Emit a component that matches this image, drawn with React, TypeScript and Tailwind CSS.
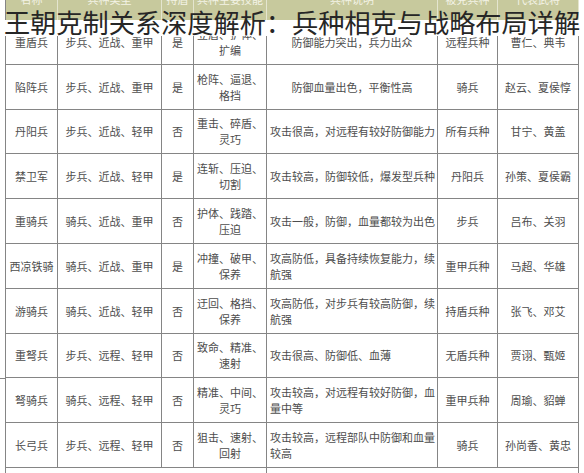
import React from 'react';

interface TroopRow {
  name: string;
  type: string;
  shield: string;
  skills: [string, string];
  desc: string[];
  descAlign: 'center' | 'left';
  counter: string;
  heroes: string;
}

const headers = ['名称', '兵种类型', '持盾', '兵种主要技能', '兵种说明', '被克兵种', '代表武将'];

const rows: TroopRow[] = [
  { name: '重盾兵', type: '步兵、近战、重甲', shield: '是', skills: ['立盾、护体、', '扩编'], desc: ['防御能力突出，兵力出众'], descAlign: 'center', counter: '远程兵种', heroes: '曹仁、典韦' },
  { name: '陷阵兵', type: '步兵、近战、重甲', shield: '是', skills: ['枪阵、逼退、', '格挡'], desc: ['防御血量出色，平衡性高'], descAlign: 'center', counter: '骑兵', heroes: '赵云、夏侯惇' },
  { name: '丹阳兵', type: '步兵、近战、轻甲', shield: '否', skills: ['重击、碎盾、', '灵巧'], desc: ['攻击很高，对远程有较好防御能力'], descAlign: 'left', counter: '所有兵种', heroes: '甘宁、黄盖' },
  { name: '禁卫军', type: '步兵、近战、轻甲', shield: '是', skills: ['连斩、压迫、', '切割'], desc: ['攻击较高，防御较低，爆发型兵种'], descAlign: 'left', counter: '丹阳兵', heroes: '孙策、夏侯霸' },
  { name: '重骑兵', type: '骑兵、近战、重甲', shield: '否', skills: ['护体、践踏、', '压迫'], desc: ['攻击一般，防御，血量都较为出色'], descAlign: 'left', counter: '步兵', heroes: '吕布、关羽' },
  { name: '西凉铁骑', type: '骑兵、近战、重甲', shield: '是', skills: ['冲撞、破甲、', '保养'], desc: ['攻高防低，具备持续恢复能力，续', '航强'], descAlign: 'left', counter: '重甲兵种', heroes: '马超、华雄' },
  { name: '游骑兵', type: '骑兵、近战、轻甲', shield: '否', skills: ['迂回、格挡、', '保养'], desc: ['攻高防低，对步兵有较高防御，续', '航强'], descAlign: 'left', counter: '持盾兵种', heroes: '张飞、邓艾' },
  { name: '重弩兵', type: '步兵、远程、轻甲', shield: '否', skills: ['致命、精准、', '速射'], desc: ['攻击很高、防御低、血薄'], descAlign: 'left', counter: '无盾兵种', heroes: '贾诩、甄姬' },
  { name: '弩骑兵', type: '骑兵、远程、轻甲', shield: '否', skills: ['精准、中间、', '灵巧'], desc: ['攻击较高，对远程有较好防御，血', '量中等'], descAlign: 'left', counter: '重甲兵种', heroes: '周瑜、貂蝉' },
  { name: '长弓兵', type: '步兵、远程、轻甲', shield: '否', skills: ['狙击、速射、', '回射'], desc: ['攻击较高，远程部队中防御和血量', '较高'], descAlign: 'left', counter: '骑兵', heroes: '孙尚香、黄忠' },
];

const cell = 'flex items-center justify-center border-r border-b border-[#858585] text-center';

const App: React.FC = () => {
  return (
    <div className="relative w-[584px] h-[473px] overflow-hidden bg-white font-['Noto_Sans_CJK_SC',sans-serif] text-[11px] leading-[16px] text-[#4d4d4d]">
      {/* Table */}
      <div className="ml-[5px] w-[574px] border-l border-[#858585]">
        {/* Header row, mostly cropped */}
        <div className="grid h-[20px] grid-cols-[52px_104px_32px_73px_171px_60px_81px] overflow-hidden bg-[#c7c99d] text-[#f3f3e6]">
          {headers.map((h) => (
            <div key={h} className="flex justify-center border-r border-[#e4e5cf]">
              <span className="-mt-[9px]">{h}</span>
            </div>
          ))}
        </div>

        {rows.map((r) => (
          <div key={r.name} className="grid h-[44.8px] grid-cols-[52px_104px_32px_73px_171px_60px_81px]">
            <div className={cell}>{r.name}</div>
            <div className={cell}>{r.type}</div>
            <div className={cell}>{r.shield}</div>
            <div className={`${cell} flex-col`}>
              <span>{r.skills[0]}</span>
              <span>{r.skills[1]}</span>
            </div>
            <div
              className={`flex flex-col justify-center border-r border-b border-[#858585] px-[3px] ${
                r.descAlign === 'center' ? 'items-center' : 'items-start'
              }`}
            >
              {r.desc.map((line) => (
                <span key={line} className="whitespace-nowrap">{line}</span>
              ))}
            </div>
            <div className={cell}>{r.counter}</div>
            <div className={cell}>{r.heroes}</div>
          </div>
        ))}

        {/* Start of the next table below */}
        <div className="flex h-[6px]">
          <div className="ml-[260px] w-px bg-[#858585]" />
          <div className="ml-[311px] w-px bg-[#858585]" />
        </div>
      </div>

      {/* Stray rule left of the table */}
      <div className="absolute left-0 top-[378px] h-px w-[5px] bg-[#858585]" />

      {/* Title overlay */}
      <div className="absolute left-0 top-[20px] h-[16px] w-full bg-white" />
      <h1 className="absolute left-[4px] top-[9px] whitespace-nowrap text-[26.2px] font-normal leading-[26px] text-[#262626]">
        王朝克制关系深度解析：兵种相克与战略布局详解
      </h1>
    </div>
  );
};

export default App;
